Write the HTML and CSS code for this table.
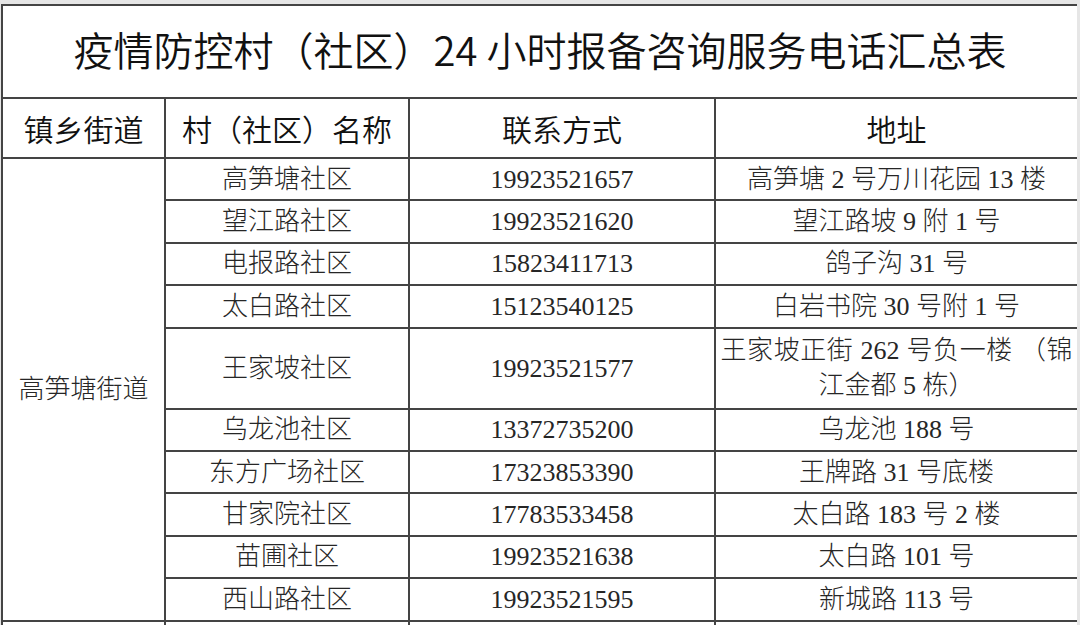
FILE: index.html
```html
<!DOCTYPE html>
<html lang="zh-CN">
<head>
<meta charset="utf-8">
<title>疫情防控村（社区）24小时报备咨询服务电话汇总表</title>
<link rel="stylesheet" href="styles.css">
</head>
<body>
<div class="page">
<table class="sheet">
  <colgroup>
    <col class="c1"><col class="c2"><col class="c3"><col class="c4">
  </colgroup>
  <tr class="title-row"><td colspan="4" class="title">疫情防控村（社区）24 小时报备咨询服务电话汇总表</td></tr>
  <tr class="head-row">
    <td class="head">镇乡街道</td>
    <td class="head">村（社区）名称</td>
    <td class="head">联系方式</td>
    <td class="head">地址</td>
  </tr>
  <tr class="row">
    <td class="street" rowspan="10">高笋塘街道</td>
    <td>高笋塘社区</td><td>19923521657</td><td>高笋塘 2 号万川花园 13 楼</td>
  </tr>
  <tr class="row"><td>望江路社区</td><td>19923521620</td><td>望江路坡 9 附 1 号</td></tr>
  <tr class="row"><td>电报路社区</td><td>15823411713</td><td>鸽子沟 31 号</td></tr>
  <tr class="row"><td>太白路社区</td><td>15123540125</td><td>白岩书院 30 号附 1 号</td></tr>
  <tr class="row-tall"><td>王家坡社区</td><td>19923521577</td><td class="addr2"><span class="just">王家坡正街 262 号负一楼 （锦</span><br>江金都 5 栋）</td></tr>
  <tr class="row"><td>乌龙池社区</td><td>13372735200</td><td>乌龙池 188 号</td></tr>
  <tr class="row"><td>东方广场社区</td><td>17323853390</td><td>王牌路 31 号底楼</td></tr>
  <tr class="row"><td>甘家院社区</td><td>17783533458</td><td>太白路 183 号 2 楼</td></tr>
  <tr class="row"><td>苗圃社区</td><td>19923521638</td><td>太白路 101 号</td></tr>
  <tr class="row"><td>西山路社区</td><td>19923521595</td><td>新城路 113 号</td></tr>
  <tr class="row"><td></td><td></td><td></td><td></td></tr>
</table>
</div>
</body>
</html>
```

FILE: styles.css
```css
html, body {
  margin: 0;
  padding: 0;
  background: #e6e6e6;
}
.page {
  padding: 4px 0 0 1px;
  width: 1076px;
  height: 621px;
  overflow: hidden;
}
.sheet {
  border-collapse: collapse;
  table-layout: fixed;
  width: 1076px;
  background: #ffffff;
  color: #222222;
}
.c1 { width: 163px; }
.c2 { width: 244px; }
.c3 { width: 306px; }
.c4 { width: 363px; }
.sheet td {
  border: 2px solid #444444;
  padding: 0 4px;
  text-align: center;
  vertical-align: middle;
  font-family: "Liberation Serif", "Noto Sans CJK SC", serif;
  font-weight: 300;
  font-size: 26px;
  line-height: 35px;
  white-space: nowrap;
  color: #262626;
}
.title-row { height: 93px; }
.sheet td.title {
  font-family: "Noto Sans CJK SC", sans-serif;
  font-weight: 350;
  font-size: 40px;
  color: #111111;
  padding-bottom: 4px;
}
.head-row { height: 60px; }
.sheet td.head {
  font-family: "Noto Sans CJK SC", sans-serif;
  font-weight: 350;
  font-size: 30px;
  color: #111111;
}
.row { height: 42.4px; }
.row-tall { height: 81px; }
.sheet td.street { padding: 0; }
.sheet td.addr2 { padding: 0 2px; }
.just {
  display: inline-block;
  width: 352px;
  text-align: justify;
  text-align-last: justify;
}
```
